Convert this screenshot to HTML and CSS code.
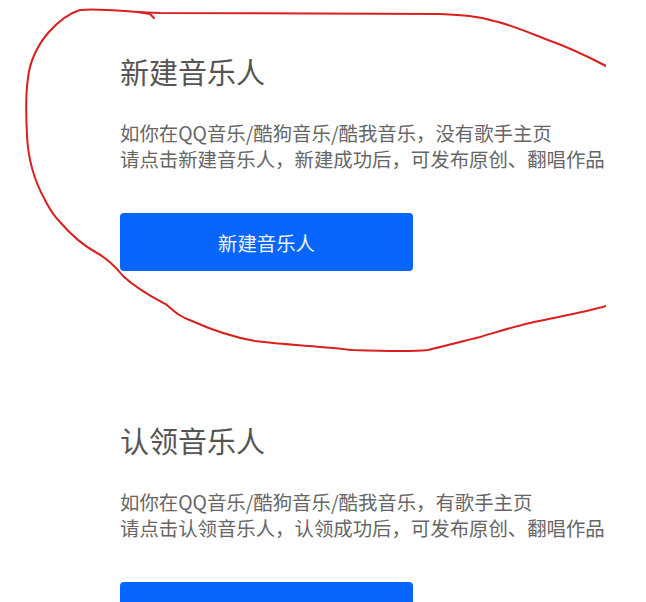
FILE: index.html
```html
<!DOCTYPE html>
<html lang="zh-CN">
<head>
<meta charset="utf-8">
<title>音乐人</title>
<link rel="stylesheet" href="styles.css">
</head>
<body>
<div class="page">
  <div class="content">
    <section class="card">
      <h2 class="title">新建音乐人</h2>
      <p class="desc">如你在QQ音乐/酷狗音乐/酷我音乐，没有歌手主页<br>请点击新建音乐人，新建成功后，可发布原创、翻唱作品</p>
      <button class="btn">新建音乐人</button>
    </section>
    <section class="card">
      <h2 class="title">认领音乐人</h2>
      <p class="desc">如你在QQ音乐/酷狗音乐/酷我音乐，有歌手主页<br>请点击认领音乐人，认领成功后，可发布原创、翻唱作品</p>
      <button class="btn">认领音乐人</button>
    </section>
  </div>
  <svg class="mark" width="606" height="602" viewBox="0 0 606 602" xmlns="http://www.w3.org/2000/svg">
    <path d="M606,66 C585,55 565,46 548,40 C530,33 512,25 494,21 C478,16 462,15 440,14 L160,13 C130,12 100,8 80,10 C66,14 56,24 48,33 C38,45 30,60 28,78 C25,98 26,116 27,135 C28,160 35,182 45,200 C50,210 54,216 60,222 C72,236 86,247 97,253 C106,258 115,266 123,276 C138,290 154,298 167,305 C175,312 180,317 192,321 C212,330 232,337 255,341 C285,345 320,346 353,350 C380,351 410,352 428,350 C445,346 463,341 480,337 C497,332 512,327 530,323 C556,317 583,313 606,306" fill="none" stroke="#d8201e" stroke-width="2" stroke-linecap="round" stroke-linejoin="round"/>
    <path d="M138,12 L150,14 L154,18" fill="none" stroke="#d8201e" stroke-width="2" stroke-linecap="round"/>
  </svg>
</div>
</body>
</html>
```
FILE: styles.css
```css
html, body {
  margin: 0;
  padding: 0;
  background: #ffffff;
}

.page {
  position: relative;
  width: 606px;
  height: 602px;
  overflow: hidden;
  font-family: "Noto Sans CJK SC", "Noto Sans", sans-serif;
}

.content {
  display: flex;
  flex-direction: column;
  gap: 149px;
  padding: 51px 0 0 120px;
}

.card {
  display: flex;
  flex-direction: column;
  align-items: flex-start;
}

.title {
  margin: 0 0 29px;
  font-size: 29px;
  line-height: 40px;
  font-weight: 400;
  color: #555555;
  white-space: nowrap;
}

.desc {
  margin: 0 0 41px;
  font-size: 19.4px;
  line-height: 26px;
  color: #666666;
  white-space: nowrap;
}

.btn {
  width: 293px;
  height: 58px;
  border: none;
  border-radius: 4px;
  background: #0866ff;
  color: #eef3ff;
  font-family: inherit;
  font-size: 19.4px;
  padding: 0;
}

.mark {
  position: absolute;
  left: 0;
  top: 0;
  pointer-events: none;
}
```
